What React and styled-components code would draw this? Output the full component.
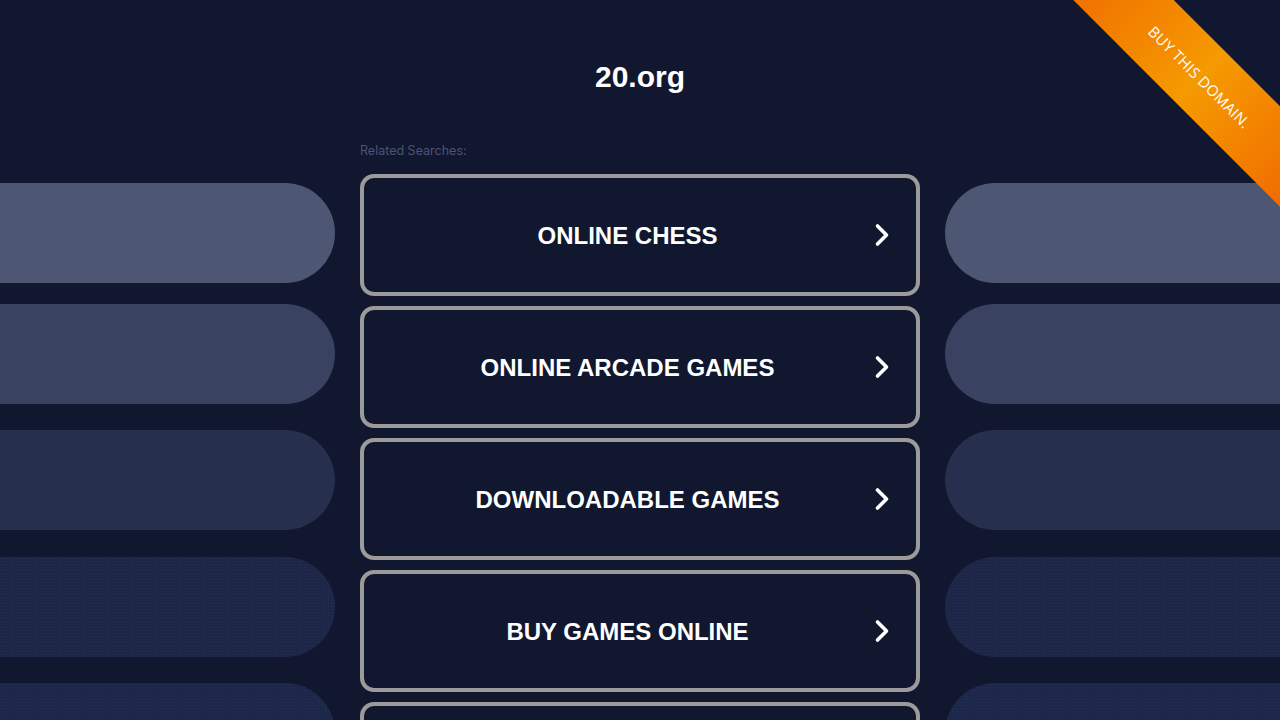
import React from "react";
import styled, { createGlobalStyle, css } from "styled-components";

const GlobalStyle = createGlobalStyle`
  html, body {
    margin: 0;
    padding: 0;
    background: #11172e;
  }
  body {
    font-family: "Liberation Sans", Arial, sans-serif;
    overflow: hidden;
  }
`;

const Page = styled.div`
  position: relative;
  width: 1280px;
  height: 720px;
  overflow: hidden;
  background: #11172e;
`;

const Header = styled.header`
  height: 140px;
  padding-top: 59px;
  box-sizing: border-box;
  text-align: center;
`;

const Title = styled.h1`
  margin: 0;
  font-size: 30px;
  line-height: 36px;
  font-weight: 700;
  color: #ffffff;
`;

const Body = styled.div`
  display: grid;
  grid-template-columns: 1fr 560px 1fr;
  column-gap: 25px;
`;

const SideColumn = styled.div`
  display: flex;
  flex-direction: column;
  padding-top: 43px;
`;

const dots = css`
  background-image: radial-gradient(rgba(60, 80, 140, 0.22) 0.6px, transparent 0.9px);
  background-size: 3px 3px;
`;

const Pill = styled.div`
  height: 100px;
  flex-shrink: 0;
  background-color: ${(p) => p.$color};
  border-radius: ${(p) => (p.$side === "left" ? "0 50px 50px 0" : "50px 0 0 50px")};
  ${(p) => p.$textured && dots}
`;

const Main = styled.main`
  display: flex;
  flex-direction: column;
`;

const Label = styled.div`
  height: 20px;
  line-height: 22px;
  margin-bottom: 14px;
  font-family: Inter, "Noto Sans", sans-serif;
  font-size: 12.5px;
  color: #4c5474;
`;

const List = styled.div`
  display: flex;
  flex-direction: column;
  gap: 10px;
`;

const SearchButton = styled.a`
  display: flex;
  align-items: center;
  height: 122px;
  box-sizing: border-box;
  padding: 0 26px 0 17px;
  border: 4px solid #9b9b9b;
  border-radius: 14px;
  background: #11172e;
  color: #ffffff;
  text-decoration: none;
  cursor: pointer;
`;

const ButtonText = styled.span`
  flex: 1;
  padding-top: 2px;
  text-align: center;
  font-size: 24px;
  font-weight: 700;
`;

const Ribbon = styled.div`
  position: absolute;
  top: 41px;
  right: -70px;
  width: 300px;
  height: 71px;
  transform: rotate(45deg);
  background: linear-gradient(to right, #f07000 0%, #f48d00 35%, #f59a00 50%, #f48d00 65%, #f06c00 100%);
  display: flex;
  align-items: center;
  justify-content: center;
  font-family: "Open Sans", "Noto Sans", sans-serif;
  font-size: 15px;
  letter-spacing: 0.2px;
  color: #ffffff;
`;

const Chevron = () => (
  <svg width="16" height="24" viewBox="0 0 16 24" fill="none">
    <path
      d="M3.5 3 L12.5 12 L3.5 21"
      stroke="#ffffff"
      strokeWidth="3.6"
      strokeLinecap="round"
      strokeLinejoin="round"
    />
  </svg>
);

const pills = [
  { color: "#4d5673", gap: 0 },
  { color: "#3a4261", gap: 21 },
  { color: "#272f4e", gap: 26 },
  { color: "#1e2647", gap: 27, textured: true },
  { color: "#1d2749", gap: 26, textured: true },
];

const searches = [
  "ONLINE CHESS",
  "ONLINE ARCADE GAMES",
  "DOWNLOADABLE GAMES",
  "BUY GAMES ONLINE",
  "FREE ONLINE GAMES",
];

const Side = ({ side }) => (
  <SideColumn>
    {pills.map((p, i) => (
      <Pill
        key={i}
        $side={side}
        $color={p.color}
        $textured={p.textured}
        style={{ marginTop: p.gap }}
      />
    ))}
  </SideColumn>
);

const App = () => (
  <Page>
    <GlobalStyle />
    <Header>
      <Title>20.org</Title>
    </Header>
    <Body>
      <Side side="left" />
      <Main>
        <Label>Related Searches:</Label>
        <List>
          {searches.map((s) => (
            <SearchButton key={s}>
              <ButtonText>{s}</ButtonText>
              <Chevron />
            </SearchButton>
          ))}
        </List>
      </Main>
      <Side side="right" />
    </Body>
    <Ribbon>BUY THIS DOMAIN.</Ribbon>
  </Page>
);

export default App;
